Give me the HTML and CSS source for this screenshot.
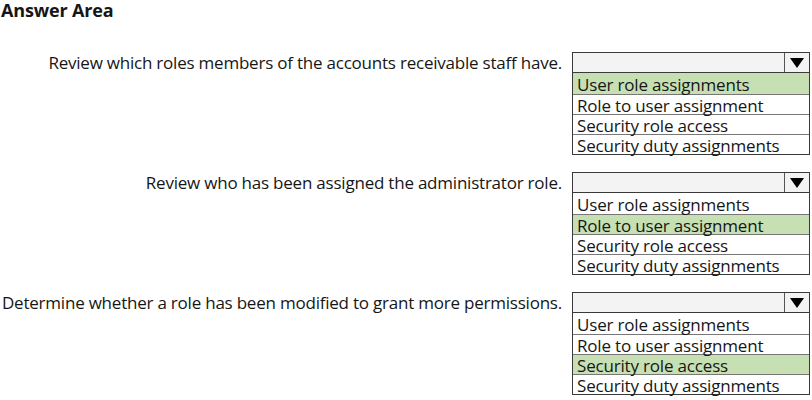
FILE: index.html
```html
<!DOCTYPE html>
<html>
<head>
<meta charset="utf-8">
<link rel="stylesheet" href="styles.css">
</head>
<body>
<h1 class="title">Answer Area</h1>
<div class="rows">
  <div class="row">
    <div class="label">Review which roles members of the accounts receivable staff have.</div>
    <div class="dd">
      <div class="dd-head"><span class="dd-field"></span><span class="dd-arrow"><svg width="14" height="10" viewBox="0 0 14 10"><polygon points="0,0 14,0 7,10" fill="#000"/></svg></span></div>
      <ul class="dd-list">
        <li class="sel">User role assignments</li>
        <li>Role to user assignment</li>
        <li>Security role access</li>
        <li>Security duty assignments</li>
      </ul>
    </div>
  </div>
  <div class="row">
    <div class="label">Review who has been assigned the administrator role.</div>
    <div class="dd">
      <div class="dd-head"><span class="dd-field"></span><span class="dd-arrow"><svg width="14" height="10" viewBox="0 0 14 10"><polygon points="0,0 14,0 7,10" fill="#000"/></svg></span></div>
      <ul class="dd-list">
        <li>User role assignments</li>
        <li class="sel">Role to user assignment</li>
        <li>Security role access</li>
        <li>Security duty assignments</li>
      </ul>
    </div>
  </div>
  <div class="row">
    <div class="label">Determine whether a role has been modified to grant more permissions.</div>
    <div class="dd">
      <div class="dd-head"><span class="dd-field"></span><span class="dd-arrow"><svg width="14" height="10" viewBox="0 0 14 10"><polygon points="0,0 14,0 7,10" fill="#000"/></svg></span></div>
      <ul class="dd-list">
        <li>User role assignments</li>
        <li>Role to user assignment</li>
        <li class="sel">Security role access</li>
        <li>Security duty assignments</li>
      </ul>
    </div>
  </div>
</div>
</body>
</html>
```
FILE: styles.css
```css
html, body {
  margin: 0;
  padding: 0;
  background: #fff;
}
body {
  font-family: "Open Sans", "Noto Sans", sans-serif;
  color: #161616;
  width: 812px;
  height: 400px;
  overflow: hidden;
}
.title {
  margin: 0;
  padding: 0 0 0 1px;
  font-size: 18px;
  font-weight: 700;
  line-height: 20px;
  height: 20px;
  letter-spacing: -0.15px;
}
.rows {
  display: flex;
  flex-direction: column;
  gap: 17px;
  margin-top: 32px;
}
.row {
  display: grid;
  grid-template-columns: 562px 238px;
  column-gap: 10px;
  align-items: start;
}
.label {
  text-align: right;
  font-size: 17px;
  line-height: 21px;
  white-space: nowrap;
  letter-spacing: -0.22px;
}
.dd {
  width: 238px;
}
.dd-head {
  display: flex;
  height: 21px;
  box-sizing: border-box;
  border: 1px solid #3a3a3a;
  background: #f3f3f3;
}
.dd-field {
  flex: 1;
}
.dd-arrow {
  width: 24px;
  border-left: 1px solid #555;
  display: flex;
  align-items: center;
  justify-content: center;
}
.dd-list {
  list-style: none;
  margin: 0;
  padding: 0;
  border: 1px solid #3a3a3a;
  border-top: none;
}
.dd-list li {
  height: 20px;
  box-sizing: border-box;
  padding-top: 2px;
  line-height: 17px;
  font-size: 17px;
  padding-left: 4px;
  border-top: 1px solid #777;
  letter-spacing: -0.18px;
  white-space: nowrap;
}
.dd-list li:first-child {
  border-top: none;
  height: 21px;
  padding-top: 3px;
}
.dd-list li.sel {
  background: #c6e0b4;
}
```
